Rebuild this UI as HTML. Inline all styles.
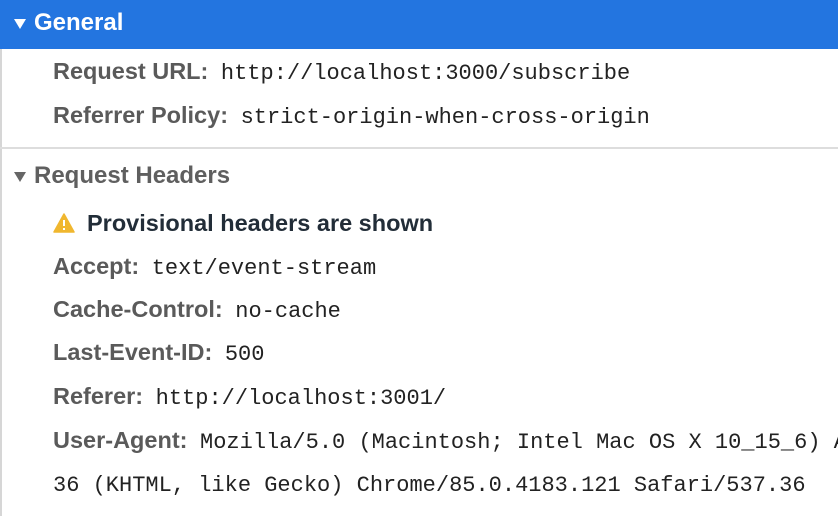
<!DOCTYPE html>
<html><head><style>
html,body{margin:0;width:838px;height:516px;overflow:hidden}
body{background:#fff;font-family:"Liberation Sans",sans-serif;position:relative}
.lb{position:absolute;left:0;top:0;width:2px;height:516px;background:#d6d6d6}
.hdr{position:absolute;left:0;top:0;width:838px;height:49px;background:#2375e0;color:#fff;font-weight:bold;font-size:24px}
.row{position:absolute;left:53px;right:0;overflow:hidden;font-size:23.5px;white-space:nowrap;color:#303030;letter-spacing:0}
.row b{color:#5a5a5a;margin-right:6px}
.m{font-family:"Liberation Mono",monospace;font-size:22px;color:#222;letter-spacing:0}
.tri{display:inline-block;width:0;height:0;border-left:6px solid transparent;border-right:6px solid transparent;border-top:10px solid #fff;margin-right:8px;vertical-align:middle}
.sep{position:absolute;left:0;top:147px;width:838px;height:2px;background:#ddd}
</style></head><body>
<div class="hdr"><div style="position:absolute;left:14px;top:9px"><span class="tri"></span>General</div></div>
<div class="lb" style="top:49px;height:467px"></div>
<div class="row" style="top:58px"><b>Request URL:</b> <span class="m">http://localhost:3000/subscribe</span></div>
<div class="row" style="top:102px"><b>Referrer Policy:</b> <span class="m">strict-origin-when-cross-origin</span></div>
<div class="sep"></div>
<div class="row" style="left:14px;top:162px;font-size:24px"><b style="color:#5f5f5f"><span class="tri" style="border-top-color:#666"></span>Request Headers</b></div>
<div class="row" style="top:210px"><svg width="22" height="20" viewBox="0 0 22 20" style="vertical-align:-2px;margin-right:12px"><path d="M11 1L21 19H1Z" fill="#f0b72f" stroke="#f0b72f" stroke-linejoin="round" stroke-width="1.5"/><rect x="10" y="7" width="2" height="6" fill="#fff"/><rect x="10" y="15" width="2" height="2" fill="#fff"/></svg><b style="color:#222d38">Provisional headers are shown</b></div>
<div class="row" style="top:253px"><b>Accept:</b> <span class="m">text/event-stream</span></div>
<div class="row" style="top:296px"><b>Cache-Control:</b> <span class="m">no-cache</span></div>
<div class="row" style="top:339px"><b>Last-Event-ID:</b> <span class="m">500</span></div>
<div class="row" style="top:383px"><b>Referer:</b> <span class="m">http://localhost:3001/</span></div>
<div class="row" style="top:427px"><b>User-Agent:</b> <span class="m">Mozilla/5.0 (Macintosh; Intel Mac OS X 10_15_6) AppleWebKit/537.</span></div>
<div class="row" style="top:470px"><span class="m">36 (KHTML, like Gecko) Chrome/85.0.4183.121 Safari/537.36</span></div>
</body></html>
